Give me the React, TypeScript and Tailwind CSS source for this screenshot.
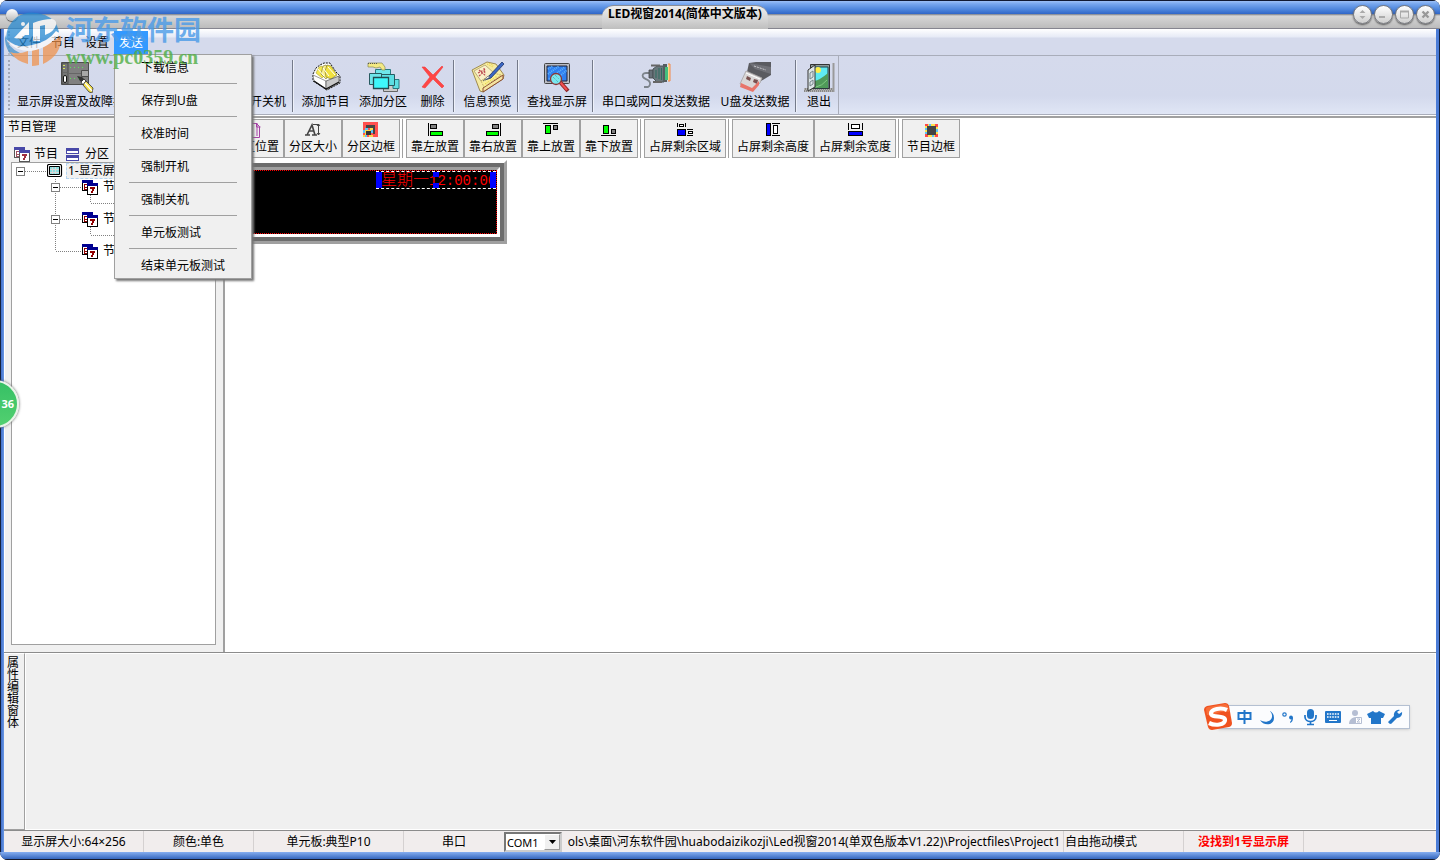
import React from "react";

type P = { children?: React.ReactNode };

/* ---------- icons ---------- */
const Svg = ({ w = 32, h = 32, children, crisp = false }: P & { w?: number; h?: number; crisp?: boolean }) => (
  <svg width={w} height={h} viewBox={`0 0 ${w} ${h}`} fill="none" aria-hidden="true" className="shrink-0" shapeRendering={crisp ? "crispEdges" : undefined}>
    {children}
  </svg>
);

const BoardIcon = () => (
  <Svg w={34} h={32}>
    <path d="M1.500 1.500h27v22h-27z" fill="#808080" stroke="#4c4c4c" />
    <path d="M2 2h6v21H2z" fill="#767676" stroke="#4c4c4c" />
    <path d="M3 4.500h2M3 7.500h2" stroke="#d8e85e" />
    <path d="M10 6.500h13M10 17.500h9" stroke="#5ee05e" strokeDasharray="1 3" />
    <path d="M2.500 11.500h5M8 12.500h13" stroke="#666" />
    <rect x="3.500" y="14.500" width="3" height="7" rx="1.500" fill="#fff" stroke="#111" />
    <path d="M21.500 9.500h7v6h-7z" fill="#a8a8a8" stroke="#4c4c4c" />
    <path d="M17 15l5 1 3 3-2 3-3-2z" fill="#333" />
    <path d="M21 21l3-3 2 2-3 4z" fill="#fff" stroke="#222" strokeWidth=".8" />
    <path d="M23 24l3-4 7 7-1 5-3-1z" fill="#f4e04a" stroke="#333" strokeWidth=".8" />
    <path d="M25 22l7 8" stroke="#fff" strokeWidth="1.200" />
  </Svg>
);
const BoxIcon = () => (
  <Svg>
    <path d="M3 13l3-6 4-3 4-2 6 0 6 9 4 4v7l-13 7L3 20z" fill="#fdfdfd" stroke="#111" strokeDasharray="2 1" />
    <path d="M6 12l3-6 3-1 3 9-3 3z" fill="#f5e84e" stroke="#a9a13a" strokeWidth=".6" />
    <path d="M11 13l2-8 3-1 4 9-4 5z" fill="#fbf08a" stroke="#77712a" strokeWidth=".6" />
    <path d="M16 16l-1-6 2-6 4 1 6 9-6 4z" fill="#f1e13e" stroke="#77712a" strokeWidth=".6" />
    <path d="M8 8l6 7M13 7l6 8M18 6l7 8" stroke="#fff" />
    <path d="M3 14l13 6v8L4 20z" fill="#fff" stroke="#555" strokeWidth=".6" />
    <path d="M16 20l13-5v7l-13 7z" fill="#c9c9c9" stroke="#333" strokeWidth=".6" />
    <path d="M4 20l12 8 13-7" stroke="#111" strokeWidth="1.200" />
  </Svg>
);
const ZonesIcon = () => (
  <Svg w={34}>
    <path d="M17.500 21.500h14v9h-14z" fill="#ccc" stroke="#666" />
    <path d="M27 18.500h6v9h-6z" fill="#5fe0e4" stroke="#287a80" />
    <path d="M9.500 8.500h15v12h-15z" fill="#6fe6ea" stroke="#287a80" />
    <path d="M13.500 13.500h15v11h-15z" fill="#5cdfe3" stroke="#285a60" />
    <path d="M3.500 12.500h12v11h-12z" fill="#6fe6ea" stroke="#285a60" />
    <path d="M7.500 16.500h15v11h-15z" fill="#3ef7fb" stroke="#234a50" strokeWidth="1.300" />
    <path d="M2 2h8l6 0 3 4v3h-3l-2-3-4 1-3-1H2z" fill="#f3ea84" stroke="#8a8a50" strokeWidth=".7" />
    <path d="M2 2.500h10" stroke="#555" strokeDasharray="1 1" />
  </Svg>
);
const DeleteIcon = () => (
  <Svg>
    <path d="M5 6l3 0 8 8 9-9 1 1-8 10 9 9-2 2-9-9-8 9-3-1 8-10z" fill="#ff4545" stroke="#f03a3a" strokeWidth=".6" />
  </Svg>
);
const BookIcon = () => (
  <Svg w={34}>
    <path d="M1 9l15-8 9 2 8 11-1 4-20 13-3-1z" fill="#f6eba2" stroke="#8c7434" strokeWidth=".8" />
    <path d="M12 27l20-13v4L12 31z" fill="#f4e3a0" stroke="#8b4a30" />
    <path d="M3 10l11-6 9 8-13 8z" fill="#faf0c8" stroke="#aaa06e" strokeWidth=".8" />
    <path d="M10 20l12-8 8 2-17 12z" fill="#f8ee98" stroke="#aa8f4e" strokeWidth=".6" strokeDasharray="2 1" />
    <path d="M7 12l8-4M8 9l7 6M8 15l6-5M13 7l1 6" stroke="#bd4d53" strokeWidth="1.200" strokeDasharray="2 1" />
    <path d="M16 3l6 3M18 2l5 3M14 23l12-8" stroke="#e8ce30" strokeDasharray="1 1" />
    <path d="M14 19l4-4L31 1l2 2-13 14z" fill="#3a66c4" stroke="#1e3568" strokeWidth=".8" />
    <path d="M12 20l5-5 2 1z" fill="#fff" stroke="#555" strokeWidth=".6" />
  </Svg>
);
const FindIcon = () => (
  <Svg>
    <rect x="3.500" y="2.500" width="25" height="20" rx="1" fill="#b9bcc4" stroke="#444" />
    <path d="M6 5h20v15H6z" fill="#2f7ff0" stroke="#223" />
    <path d="M7 8l5-3M7 13l11-8M8 18L24 6M14 19l12-10" stroke="#61b4fb" strokeDasharray="1 1" strokeWidth="2" />
    <path d="M19 21l8 9" stroke="#8d2424" strokeWidth="4" />
    <path d="M19 21l7 8" stroke="#f05050" strokeWidth="2" />
    <circle cx="15" cy="18" r="5.500" fill="#79e6ee" stroke="#8d3535" strokeWidth="1.300" />
    <path d="M12 16l5 5M14 14l4 4" stroke="#4aa" strokeDasharray="1 1" />
  </Svg>
);
const SerialIcon = () => (
  <Svg>
    <path d="M10 12H6c-3 0-4 2-3 4s4 2 6 4 1 5-1 6H4" stroke="#7d848b" strokeWidth="1.800" />
    <path d="M9 9h4v8H9z" fill="#667078" stroke="#444" strokeWidth=".8" />
    <path d="M13 8l4-3h7v16h-7l-4-4z" fill="#69777b" stroke="#4a555a" />
    <path d="M11 4.500h9M13 21h9" stroke="#666" strokeWidth="1.800" />
    <path d="M16 9v8M19 7v11M21.500 7v12" stroke="#2f6c60" />
    <path d="M23 3h4v18h-4z" fill="#555e60" />
    <path d="M25 6h3v13h-3z" fill="#45c07e" />
    <path d="M28 3h2v17h-2" fill="#fcd883" stroke="#f2884a" />
  </Svg>
);
const UsbIcon = () => (
  <Svg>
    <path d="M10 2l7-1h15v13l-10 6-14-9z" fill="#5a5b60" />
    <path d="M10 2l22 4v7L16 8z" fill="#707177" />
    <path d="M15 5l12 4" stroke="#c6c6ca" strokeDasharray="2 1" />
    <path d="M7 10l16 7-2 5-7 7L1 23z" fill="#d9d7d7" stroke="#a5a1a1" strokeWidth=".8" />
    <path d="M8 15l4 2-1 3-4-2zM15 18l4 1-1 4-4-2z" fill="#7a5150" />
    <path d="M2 22l11 5 7-7v4l-6 7L1 26z" fill="#e8756a" />
    <path d="M7 12l14 6" stroke="#fff" />
  </Svg>
);
const ExitIcon = () => (
  <Svg>
    <path d="M1 27h30v4H1z" fill="#888" />
    <path d="M1 28h30M2 30h30" stroke="#ddd" strokeDasharray="1 1" />
    <path d="M30.500 2v29" stroke="#9a9a9a" strokeWidth="2" />
    <path d="M7.500 3.500h19v24h-19z" fill="#8a9a9a" stroke="#333" />
    <path d="M11 6h14v21H11z" fill="#5feaf2" stroke="#1f4048" />
    <circle cx="15" cy="9" r="3" fill="#ffed48" />
    <path d="M11 20q6-1 14-8v15H11z" fill="#4f9a59" />
    <path d="M13 26q6-1 11-7" stroke="#82c984" />
    <path d="M5 9l7-5v22l-7 4z" fill="#dde5e7" stroke="#333" />
    <path d="M7 12l3-2v6l-3 2zM7 21l3-2v4l-3 2z" stroke="#76868c" />
  </Svg>
);

const PagesIcon = () => (
  <Svg w={18} h={16}><path d="M1.500 1.500h9l3 3v11h-12zM5 1v14M11 1v13M10.500 1v4h4" stroke="#a541a5" /></Svg>
);
const SizeIcon = () => (
  <Svg w={18} h={16}>
    <path d="M1 13h5M8 13h5M3 13l5-10 3 10M5 9h5" stroke="#444" strokeWidth="1.600" />
    <path d="M9 2.500h6M14.500 2v11M13 4l1.500-2L16 4M13 11l1.500 2 1.500-2" stroke="#444" />
  </Svg>
);
const ZoneBorderIcon = () => (
  <Svg w={16} h={16} crisp>
    <path d="M0 0h15v15H0z" fill="#ff5050" />
    <path d="M3 3h9v9H3z" fill="#444" />
    <path d="M0 6h10v9H0z" fill="#ffd84a" />
    <path d="M3 9h5v4H3z" fill="#333" />
    <path d="M0 6h2v2H0zM5 6h2v2H5zM0 11h2v2H0zM8 11h2v2H8zM4 13h2v2H4z" fill="#ff5050" />
    <path d="M2 6h3v2H2zM8 8h2v3H8zM0 8h2v3H0zM2 13h2v2H2z" fill="#5cc4f5" />
  </Svg>
);
const AlignIcon = ({ kind }: { kind: "left" | "right" | "top" | "bottom" }) => (
  <Svg w={16} h={15} crisp>
    {kind === "left" && <><path d="M1 1h1v13H1z" fill="#000" /><path d="M3.500 2.500h6v4h-6z" fill="#808080" stroke="#000" /><path d="M3.500 9.500h12v4h-12z" fill="#0f0" stroke="#000" /></>}
    {kind === "right" && <><path d="M15 1h1v13h-1z" fill="#000" /><path d="M7.500 2.500h6v4h-6z" fill="#808080" stroke="#000" /><path d="M1.500 9.500h12v4h-12z" fill="#0f0" stroke="#000" /></>}
    {kind === "top" && <><path d="M0 1h15v1H0z" fill="#000" /><path d="M2.500 3.500h5v8h-5z" fill="#0f0" stroke="#000" /><path d="M10.500 3.500h4v4h-4z" fill="#808080" stroke="#000" /></>}
    {kind === "bottom" && <><path d="M0 13h15v1H0z" fill="#000" /><path d="M2.500 3.500h5v8h-5z" fill="#0f0" stroke="#000" /><path d="M10.500 7.500h4v4h-4z" fill="#808080" stroke="#000" /></>}
  </Svg>
);
const FillAreaIcon = () => (
  <Svg w={16} h={15} crisp>
    <path d="M.5 1v4M8.500 1v4" stroke="#000" /><path d="M2.500 2.500h4v2h-4z" fill="#fff" stroke="#000" />
    <path d="M.5 7.500h8v6h-8z" fill="#00f" stroke="#000" />
    <path d="M10 7.500h6M10 13.500h6" stroke="#000" /><path d="M11.500 9.500h4v2h-4z" fill="#fff" stroke="#000" />
  </Svg>
);
const FillHeightIcon = () => (
  <Svg w={16} h={15} crisp>
    <path d="M1.500 1.500h4v12h-4z" fill="#00f" stroke="#000" />
    <path d="M7 1.500h8M7 13.500h8" stroke="#000" /><path d="M8.500 3.500h4v8h-4z" fill="#fff" stroke="#000" />
  </Svg>
);
const FillWidthIcon = () => (
  <Svg w={16} h={15} crisp>
    <path d="M1.500 9.500h14v4h-14z" fill="#00f" stroke="#000" />
    <path d="M1.500 1v7M15.500 1v7" stroke="#000" /><path d="M4.500 2.500h8v4h-8z" fill="#fff" stroke="#000" />
  </Svg>
);
const ProgramBorderIcon = () => (
  <Svg w={16} h={16} crisp>
    <path d="M2 2h13v13H2z" fill="#ffe24a" />
    <path d="M2 2h3v2H2zM12 2h3v3h-3zM2 12h3v3H2zM12 12h3v3h-3z" fill="#ff4a4a" />
    <path d="M6 2h2v2H6zM2 6h2v2H2zM13 7h2v3h-2zM9 13h2v2H9zM2 10h2v2H2z" fill="#5ac4f5" />
    <path d="M4 4h9v9H4z" fill="#444" />
  </Svg>
);
const ProgramIcon = ({ faded = false }: { faded?: boolean }) => (
  <Svg w={16} h={16} crisp>
    <path d="M.5 1.500h10v10H.5z" fill="#fff" stroke={faded ? "#555" : "#000"} />
    <path d="M0 1h11v3H0z" fill={faded ? "#4848a8" : "#000090"} />
    <path d="M2 5.500h3M2 8h3M2 10.500h3M2 6v5" stroke={faded ? "#a05060" : "#900000"} />
    <path d="M5.500 4.500h10v11h-10z" fill="#fff" stroke={faded ? "#555" : "#000"} />
    <path d="M5 4h11v3H5z" fill={faded ? "#4848a8" : "#000090"} />
    <path d="M8 8h5v2h-1v2h-1v2H9v-2h1v-2H8z" fill={faded ? "#a03040" : "#900000"} />
  </Svg>
);
const ZoneIcon = () => (
  <Svg w={13} h={13} crisp>
    <path d="M0 0h13v6H0zM0 7h13v6H0z" fill="#4848a8" />
    <path d="M1 3h11v2H1zM1 10h11v2H1z" fill="#fff" />
  </Svg>
);
const ScreenIcon = () => (
  <Svg w={16} h={14}>
    <rect x=".5" y=".5" width="14" height="12" rx="1.500" fill="#fff" stroke="#000" strokeWidth="1.200" />
    <path d="M2.500 2.500h10v8h-10z" fill="#8ee0e0" stroke="#000" />
    <path d="M3 5.500h9M3 8.500h9M5.500 3v7M8.500 3v7" stroke="#d8d8d8" />
  </Svg>
);

/* ---------- window chrome ---------- */
const Round = ({ label, children }: P & { label: string }) => (
  <button aria-label={label} className="flex h-[19px] w-[19px] items-center justify-center rounded-full border border-[#77797f] bg-gradient-to-b from-white to-[#cfcfcf] shadow-[0_1px_2px_#555]">
    <svg width="11" height="11" viewBox="0 0 11 11" fill="none" aria-hidden="true">{children}</svg>
  </button>
);

const TitleBar = () => (
  <header className="relative flex h-[29px] shrink-0 items-center justify-center border-t border-b border-t-[#111a33] border-b-[#85858f] bg-[linear-gradient(#9cc0f7_0px,#76a6ee_3px,#4a82da_9px,#2f66c8_13px,#777c88_13px,#d6d6d6_15px,#bcbcbc_27px)] pr-[70px]">
    <span className="absolute left-1.5 top-2 h-3 w-3 rounded-full bg-gradient-to-b from-white to-[#bbb] shadow-[0_1px_1px_#555]" />
    <h1 className="mt-1 h-6 rounded-t-xl border-t border-[#8a8e98] bg-[linear-gradient(#eeeeee_0px,#d8d8d8_12px,#bcbcbc_24px)] px-1.5 text-xs leading-4 font-bold">LED视窗2014(简体中文版本)</h1>
    <div className="absolute right-[5px] top-1 flex gap-0.5">
      <Round label="卷起"><path d="M2.500 4l3-3 3 3zM2.500 7h6l-3 3z" fill="#aaa" /></Round>
      <Round label="最小化"><path d="M1 8h6" stroke="#aaa" strokeWidth="2" /></Round>
      <Round label="最大化"><path d="M1.500 2.500h8v6.500h-8z" stroke="#aaa" /><path d="M1 2.500h9" stroke="#aaa" strokeWidth="2" /></Round>
      <Round label="关闭"><path d="M2.500 2.500l6 6M8.500 2.500l-6 6" stroke="#999" strokeWidth="2.400" /></Round>
    </div>
  </header>
);

const sendItems = ["下载信息", "保存到U盘", "校准时间", "强制开机", "强制关机", "单元板测试", "结束单元板测试"];

const MenuBar = () => (
  <nav className="flex h-[27px] shrink-0 items-start border-b border-[#a9adba] bg-[linear-gradient(#ffffff_0px,#e6eaf6_8px,#d5daec_9px)] pt-0.5">
    <div className="ml-1 h-6 w-1 border-l-2 border-dotted border-[#b5b9c8]" />
    {["文件", "节目", "设置"].map((m) => (
      <button key={m} className="h-6 px-[5px]">{m}</button>
    ))}
    <div className="relative">
      <button className="h-6 bg-[#3399ff] px-[5px] text-white" aria-expanded="true">发送</button>
      <ul className="absolute left-0 top-[23px] z-20 w-[138px] border border-[#a0a0a0] bg-[#f0f0f0] px-3.5 shadow-[2px_2px_2px_#777]">
        {sendItems.map((m, i) => (
          <li key={m} className={i ? "border-t border-[#a0a0a0]" : ""}>
            <button className={`block w-full pl-3 text-left leading-4 whitespace-nowrap ${i === 0 ? "h-7 pb-0.5" : i === 6 ? "h-[29px] pt-1" : "h-8 pt-0.5"}`}>{m}</button>
          </li>
        ))}
      </ul>
    </div>
  </nav>
);

const ToolButton = ({ label, width, icon }: { label: string; width: string; icon?: React.ReactNode }) => (
  <button className={`flex h-[51px] shrink-0 flex-col items-center justify-end leading-[18px] whitespace-nowrap ${width}`}>
    {icon}
    {label}
  </button>
);
const Sep = () => <div className="mr-[3px] h-[52px] w-0.5 shrink-0 border-l border-[#747a8a] bg-[#eef1fa]" />;

const MainToolbar = () => (
  <div role="toolbar" className="flex h-[59px] shrink-0 items-start overflow-hidden border-b border-[#a9adba] bg-[linear-gradient(#d5daec_0px,#d3d9ec_40px,#e0e6f5_58px)] pt-1">
    <div className="ml-1 h-[50px] w-1 border-l-2 border-dotted border-[#a3a8b8]" />
    <ToolButton label="显示屏设置及故障排除" width="w-[130px]" icon={<BoardIcon />} />
    <div className="w-[79px] shrink-0" />
    <ToolButton label="定时开关机" width="w-[70px]" />
    <div className="w-px shrink-0" />
    <Sep />
    <ToolButton label="添加节目" width="w-[57px]" icon={<BoxIcon />} />
    <ToolButton label="添加分区" width="w-[58px]" icon={<ZonesIcon />} />
    <ToolButton label="删除" width="w-[41px]" icon={<DeleteIcon />} />
    <Sep />
    <ToolButton label="信息预览" width="w-[59px]" icon={<BookIcon />} />
    <Sep />
    <ToolButton label="查找显示屏" width="w-[70px]" icon={<FindIcon />} />
    <Sep />
    <ToolButton label="串口或网口发送数据" width="w-[118px]" icon={<SerialIcon />} />
    <ToolButton label="U盘发送数据" width="w-[80px]" icon={<UsbIcon />} />
    <Sep />
    <ToolButton label="退出" width="w-[38px]" icon={<ExitIcon />} />
    <div className="-mt-1 h-[58px] w-px bg-[#a9adba]" />
  </div>
);

/* ---------- program tree ---------- */
type BranchKind = "blank" | "root" | "node" | "last" | "pass" | "leaf";
const Branch = ({ kind }: { kind: BranchKind }) => (
  <svg width="35" height="16" viewBox="0 0 35 16" fill="none" aria-hidden="true" className="shrink-0" shapeRendering="crispEdges">
    <g stroke="#808080" strokeDasharray="1 1">
      {(kind === "node" || kind === "pass") && <path d="M8.500 0v16" />}
      {(kind === "leaf" || kind === "last") && <path d="M8.500 0v8" />}
      {kind !== "blank" && kind !== "pass" && <path d="M9 8.500h26" />}
    </g>
    {(kind === "root" || kind === "node") && (
      <><rect x="4.500" y="4.500" width="8" height="8" fill="#fff" stroke="#808080" /><path d="M6 8.500h5" stroke="#000" /></>
    )}
  </svg>
);
const Row = ({ branches, icon, label, selected = false }: { branches: BranchKind[]; icon?: React.ReactNode; label?: string; selected?: boolean }) => (
  <li className="flex h-4 items-center whitespace-nowrap">
    {branches.map((b, i) => <Branch key={i} kind={b} />)}
    {icon}
    {label && <span className={selected ? "ml-[3px] border border-dashed border-[#b4d4f0] bg-[#f0f0f0] px-px leading-[14px]" : "ml-[5px] leading-4"}>{label}</span>}
  </li>
);

const Sidebar = () => (
  <aside className="flex w-[219px] shrink-0 flex-col border-l border-white bg-[#f0f0f0]">
    <h2 className="h-[19px] border-b border-[#a0a0a0] pl-[3px] text-xs leading-[18px]">节目管理</h2>
    <div className="mt-[9px] flex h-4 items-center pl-[9px]">
      <button className="flex items-center gap-1"><ProgramIcon faded />节目</button>
      <button className="ml-2 flex items-center gap-1.5"><ZoneIcon />分区</button>
    </div>
    <ul className="mr-[7px] mb-[7px] ml-1.5 flex-1 overflow-hidden border border-[#a0a0a0] bg-white">
      <Row branches={["root"]} icon={<ScreenIcon />} label="1-显示屏" selected />
      <Row branches={["blank", "node"]} icon={<ProgramIcon />} label="节目" />
      <Row branches={["blank", "pass", "leaf"]} />
      <Row branches={["blank", "node"]} icon={<ProgramIcon />} label="节目" />
      <Row branches={["blank", "pass", "leaf"]} />
      <Row branches={["blank", "last"]} icon={<ProgramIcon />} label="节目" />
    </ul>
  </aside>
);

/* ---------- editor ---------- */
const SmallButton = ({ label, icon, wide = false }: { label: string; icon: React.ReactNode; wide?: boolean }) => (
  <button className={`flex h-[39px] shrink-0 flex-col items-center border border-[#a0a0a0] bg-[#f0f0f0] pt-0.5 leading-4 whitespace-nowrap ${wide ? "w-[82px]" : "w-[58px]"}`}>
    <span className="flex h-[17px] items-start">{icon}</span>
    {label}
  </button>
);
const SmallSep = () => <div className="mr-[3px] ml-0.5 h-[39px] w-px shrink-0 bg-[#a0a0a0]" />;

const Editor = () => (
  <main className="min-w-0 flex-1 bg-white pt-px pl-px">
    <div role="toolbar" className="flex">
      <SmallButton label="分区位置" icon={<PagesIcon />} />
      <SmallButton label="分区大小" icon={<SizeIcon />} />
      <SmallButton label="分区边框" icon={<ZoneBorderIcon />} />
      <SmallSep />
      <SmallButton label="靠左放置" icon={<AlignIcon kind="left" />} />
      <SmallButton label="靠右放置" icon={<AlignIcon kind="right" />} />
      <SmallButton label="靠上放置" icon={<AlignIcon kind="top" />} />
      <SmallButton label="靠下放置" icon={<AlignIcon kind="bottom" />} />
      <SmallSep />
      <SmallButton wide label="占屏剩余区域" icon={<FillAreaIcon />} />
      <SmallSep />
      <SmallButton wide label="占屏剩余高度" icon={<FillHeightIcon />} />
      <SmallButton wide label="占屏剩余宽度" icon={<FillWidthIcon />} />
      <SmallSep />
      <SmallButton label="节目边框" icon={<ProgramBorderIcon />} />
    </div>
    <div className="mt-0.5 ml-[5px] w-fit border-[3px] border-t-white border-r-[#a0a0a0] border-b-[#a0a0a0] border-l-white">
      <div className="border-4 border-[#6d6d6d]">
        <div className="border-[3px] border-t-[#a0a0a0] border-r-white border-b-white border-l-[#a0a0a0]">
          <div className="flex h-16 w-64 items-start justify-end border border-dotted border-[#ff0000] bg-black">
            <div className="relative flex h-[18px] w-[120px] items-center overflow-hidden border-y border-dashed border-white pt-0.5 pl-[5px] font-['Liberation_Mono','Noto_Sans_CJK_SC',monospace] text-sm leading-4 whitespace-nowrap text-[#ff0000]">
              <span className="text-base leading-4 font-light">星期一</span>12:00:00
              <i className="absolute -top-px left-0 h-[18px] w-1.5 bg-[#0000ff]" />
              <i className="absolute -top-px left-[57px] h-1.5 w-1.5 bg-[#0000ff]" />
              <i className="absolute -bottom-px left-[57px] h-1.5 w-1.5 bg-[#0000ff]" />
              <i className="absolute -top-px right-0 h-[18px] w-1.5 bg-[#0000ff]" />
            </div>
          </div>
        </div>
      </div>
    </div>
  </main>
);

/* ---------- input method bar ---------- */
const ImeBar = () => (
  <div className="absolute right-[30px] bottom-[131px] flex h-6 w-[192px] items-center border border-[#b4c0d2] bg-[#fbfcfe] pl-[18px] shadow-sm">
    <svg className="absolute -top-1 -left-4" width="30" height="30" viewBox="0 0 30 30" fill="none" aria-hidden="true">
      <path d="M4 4L22 1q3 0 4 3l3 17q0 3-3 4L9 28q-3 0-4-3L1 8q0-3 3-4z" fill="#f0521f" />
      <path d="M3 7q0-2 2-2L22 2q2 0 3 2l1 6C19 8 10 14 4 13z" fill="#fb7a45" opacity=".7" />
      <path d="M24 8C18 5 8 7 8 11.500S22 13 22 18s-10 6-16 3" stroke="#fff" strokeWidth="4.200" />
    </svg>
    <svg width="166" height="22" viewBox="0 0 166 22" fill="none" aria-hidden="true" className="shrink-0">
      <g fill="#2276c9">
        <path d="M.5 6h14v8H.5zM2.500 8v4h10V8z" fillRule="evenodd" /><path d="M6.500 4h2v14h-2z" />
        <path d="M33 5c6 7-2 14-10 9 3 6 14 6 14-2 0-4-2-6-4-7z" />
        <circle cx="47.500" cy="8.500" r="1.700" fill="none" stroke="#2276c9" strokeWidth="1.200" />
        <circle cx="54" cy="11.500" r="1.900" /><path d="M56 11c0 4-1 5-3 6v-1c1-1 1.500-2 1.500-3z" />
        <rect x="70" y="3" width="7" height="10" rx="3.500" />
        <path d="M68 9v2c0 6 11 6 11 0V9M73.500 15v3M70 18.500h7" stroke="#2276c9" strokeWidth="1.700" fill="none" />
        <rect x="88" y="5" width="16" height="12" rx="1" />
        <path d="M136 5l-6 3 2 4h2v6h10v-6h2l2-4-6-3q-3 3-6 0z" />
        <path d="M163 4a5 5 0 0 0-6 6l-6 6q1 2 3 2l6-6a5 5 0 0 0 5-6l-3 2-2-2z" />
      </g>
      <path d="M90 8h12M90 11h12" stroke="#fff" strokeWidth="1.600" strokeDasharray="1.600 1" /><path d="M92 14.500h8" stroke="#fff" />
      <circle cx="118" cy="7" r="3" fill="#b5bed3" /><path d="M112 18c0-8 11-9 11-2v2z" fill="#b5bed3" />
      <path d="M118.500 11.500h6v6h-6z" fill="#fff" stroke="#b5bed3" /><path d="M120 13h3l-3 3h3" stroke="#b5bed3" />
    </svg>
  </div>
);

const Watermark = () => (
  <div className="pointer-events-none absolute top-[11px] left-[5px] z-30 flex items-start opacity-80">
    <svg width="58" height="56" viewBox="0 0 58 56" fill="none" aria-hidden="true" className="opacity-90">
      <path d="M1 28Q1 14 12 6 24-2 40 4q12 5 14 17-12 14-28 16Q14 37 5 31z" fill="#2489d2" />
      <path d="M0 24q-1 12 7 21 6 4 8-3-12-5-15-18z" fill="#3f8fc8" />
      <path d="M5 41q8 3 18-1v13Q11 50 5 41zM27 39q4 0 7-2v17q-4 1-7 1zM38 35q10-4 18-10 1 19-18 28z" fill="#f2934a" />
      <path d="M9 27L24 11v13h-4l-4 4zM28 12q10-4 19-4 5 1 4 6-2 7-11 10V14l-5 1v15h-7z" fill="#fff" />
      <path d="M3 30q9 8 24 4Q43 31 51 20l3 2Q45 37 26 40 9 40 3 30z" fill="#fff" />
      <circle cx="18" cy="13" r="2" fill="#fff" />
    </svg>
    <div className="ml-[3px] whitespace-nowrap">
      <p className="font-['Noto_Sans_CJK_SC',sans-serif] text-[27px] leading-9 font-bold text-[#4a9be8]">河东软件园</p>
      <p className="font-['Liberation_Serif',serif] text-[20px] leading-5 font-bold text-[#4fae45]">www.pc0359.cn</p>
    </div>
  </div>
);

const StatusBar = () => (
  <footer className="flex h-[22px] shrink-0 items-stretch border-t border-t-[#8c8c8c] bg-[#f1eded] text-center leading-[22px] whitespace-nowrap">
    <span className="w-[140px] shrink-0 border-r border-[#d5d1d1]">显示屏大小:64×256</span>
    <span className="w-[110px] shrink-0 border-r border-[#d5d1d1]">颜色:单色</span>
    <span className="w-[150px] shrink-0 border-r border-[#d5d1d1]">单元板:典型P10</span>
    <label htmlFor="port" className="w-[100px] shrink-0">串口</label>
    <span className="relative mt-px h-5 w-[58px] shrink-0 border-2 border-[#777] border-r-[#ccc] border-b-[#ccc] bg-white">
      <select id="port" className="block h-4 w-full appearance-none bg-white pt-px pl-px text-left text-[11px] leading-4">
        <option>COM1</option>
      </select>
      <span className="pointer-events-none absolute top-0 right-0 flex h-4 w-4 items-center justify-center border border-[#999] border-t-white border-l-white bg-[#f0f0f0]">
        <svg width="7" height="4" viewBox="0 0 7 4" aria-hidden="true"><path d="M0 0h7L3.500 4z" /></svg>
      </span>
    </span>
    <span className="ml-[3px] flex w-[499px] min-w-0 shrink justify-center overflow-hidden border-r border-[#d5d1d1]">
      <span className="shrink-0">ols\桌面\河东软件园\huabodaizikozji\Led视窗2014(单双色版本V1.22)\Projectfiles\Project1</span>
    </span>
    <span className="w-[120px] shrink-0 border-r border-[#d5d1d1] pl-px text-left">自由拖动模式</span>
    <strong className="w-[120px] shrink-0 border-r border-[#d5d1d1] text-[#ff0000]">没找到1号显示屏</strong>
  </footer>
);

export default function App() {
  return (
    <div className="relative flex min-h-screen flex-col overflow-hidden rounded-lg bg-[#14182a] font-['Noto_Sans','Noto_Sans_CJK_SC',sans-serif] text-xs text-black">
      <TitleBar />
      <div className="flex flex-1 flex-col border-x border-[#14203c] bg-[linear-gradient(90deg,#3f6fcb_0px,#6b98e4_3px,#6b98e4_50%,#4a7bd6_100%)] px-[3px]">
        <MenuBar />
        <MainToolbar />
        <div className="h-[3px] shrink-0 border-t border-b-2 border-t-white border-b-[#a0a0a0]" />
        <div className="flex flex-1">
          <Sidebar />
          <div className="w-0.5 bg-[#a0a0a0]" />
          <Editor />
        </div>
        <section className="flex h-[178px] shrink-0 border-t border-[#8c8c8c] bg-[#f0f0f0]">
          <h2 className="flex w-[21px] flex-col border-t border-r border-b border-t-white border-r-[#a0a0a0] border-b-[#a0a0a0] pt-[3px] pl-[3px] text-xs leading-3">
            {"属性编辑窗体".split("").map((c) => <span key={c}>{c}</span>)}
          </h2>
          <div className="flex-1 border border-white" />
        </section>
        <StatusBar />
      </div>
      <div className="h-2 shrink-0 border-b border-[#14182a] bg-gradient-to-b from-[#86aef0] to-[#3566bd]" />
      <Watermark />
      <div className="absolute top-[380px] -left-[29px] flex h-12 w-12 items-center justify-end rounded-full border-2 border-[#e8f4e8] bg-gradient-to-b from-[#35c065] to-[#52d070] pr-[3px] text-[11px] font-bold text-white shadow-[0_0_3px_#555]">36</div>
      <ImeBar />
    </div>
  );
}
